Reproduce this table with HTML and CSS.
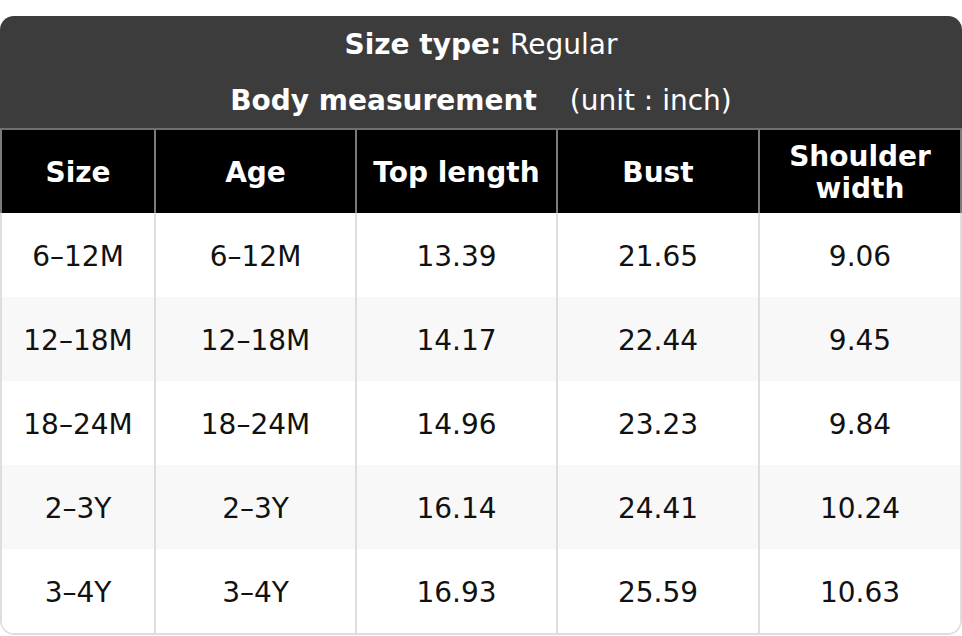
FILE: index.html
```html
<!DOCTYPE html>
<html>
<head>
<meta charset="utf-8">
<link rel="stylesheet" href="styles.css">
</head>
<body>
<div class="card">
  <div class="title">
    <div class="title-line"><b>Size type:</b> Regular</div>
    <div class="title-line"><b>Body measurement</b> <span class="unit">(unit : inch)</span></div>
  </div>
  <div class="head">
    <div class="hcell">Size</div>
    <div class="hcell">Age</div>
    <div class="hcell">Top length</div>
    <div class="hcell">Bust</div>
    <div class="hcell">Shoulder<br>width</div>
  </div>
  <div class="body">
    <div class="row">
      <div class="cell">6–12M</div><div class="cell">6–12M</div><div class="cell">13.39</div><div class="cell">21.65</div><div class="cell">9.06</div>
    </div>
    <div class="row alt">
      <div class="cell">12–18M</div><div class="cell">12–18M</div><div class="cell">14.17</div><div class="cell">22.44</div><div class="cell">9.45</div>
    </div>
    <div class="row">
      <div class="cell">18–24M</div><div class="cell">18–24M</div><div class="cell">14.96</div><div class="cell">23.23</div><div class="cell">9.84</div>
    </div>
    <div class="row alt">
      <div class="cell">2–3Y</div><div class="cell">2–3Y</div><div class="cell">16.14</div><div class="cell">24.41</div><div class="cell">10.24</div>
    </div>
    <div class="row">
      <div class="cell">3–4Y</div><div class="cell">3–4Y</div><div class="cell">16.93</div><div class="cell">25.59</div><div class="cell">10.63</div>
    </div>
  </div>
</div>
</body>
</html>
```

FILE: styles.css
```css
* { box-sizing: border-box; }
html, body {
  margin: 0;
  padding: 0;
  background: #fff;
}
body {
  font-family: "DejaVu Sans", "Liberation Sans", sans-serif;
  font-size: 28px;
  line-height: 32px;
  color: #111;
}
.card {
  margin-top: 16px;
  width: 962px;
  border-radius: 14px;
  overflow: hidden;
}
.title {
  background: #3c3c3c;
  color: #fff;
  text-align: center;
}
.title-line {
  height: 56px;
  padding-top: 13px;
}
.title b { font-weight: bold; }
.unit { margin-left: 24px; }
.head, .row {
  display: grid;
  grid-template-columns: 154px 201px 201px 202px 200px;
}
.head {
  background: #000;
  color: #fff;
  font-weight: bold;
  border-top: 2px solid #6f6f6f;
  border-left: 2px solid #7a7a7a;
  border-right: 2px solid #7a7a7a;
  height: 85px;
}
.hcell {
  display: flex;
  align-items: center;
  justify-content: center;
  text-align: center;
  border-right: 2px solid #7a7a7a;
  padding-top: 2px;
}
.hcell:last-child { border-right: none; }
.body {
  border-left: 2px solid #dedede;
  border-right: 2px solid #dedede;
  border-bottom: 2px solid #dedede;
  border-radius: 0 0 14px 14px;
  overflow: hidden;
}
.row {
  height: 84px;
  background: #fff;
}
.row.alt { background: #f8f8f8; }
.cell {
  display: flex;
  align-items: center;
  justify-content: center;
  border-right: 2px solid #dedede;
  padding-top: 4px;
}
.cell:last-child { border-right: none; }
```
